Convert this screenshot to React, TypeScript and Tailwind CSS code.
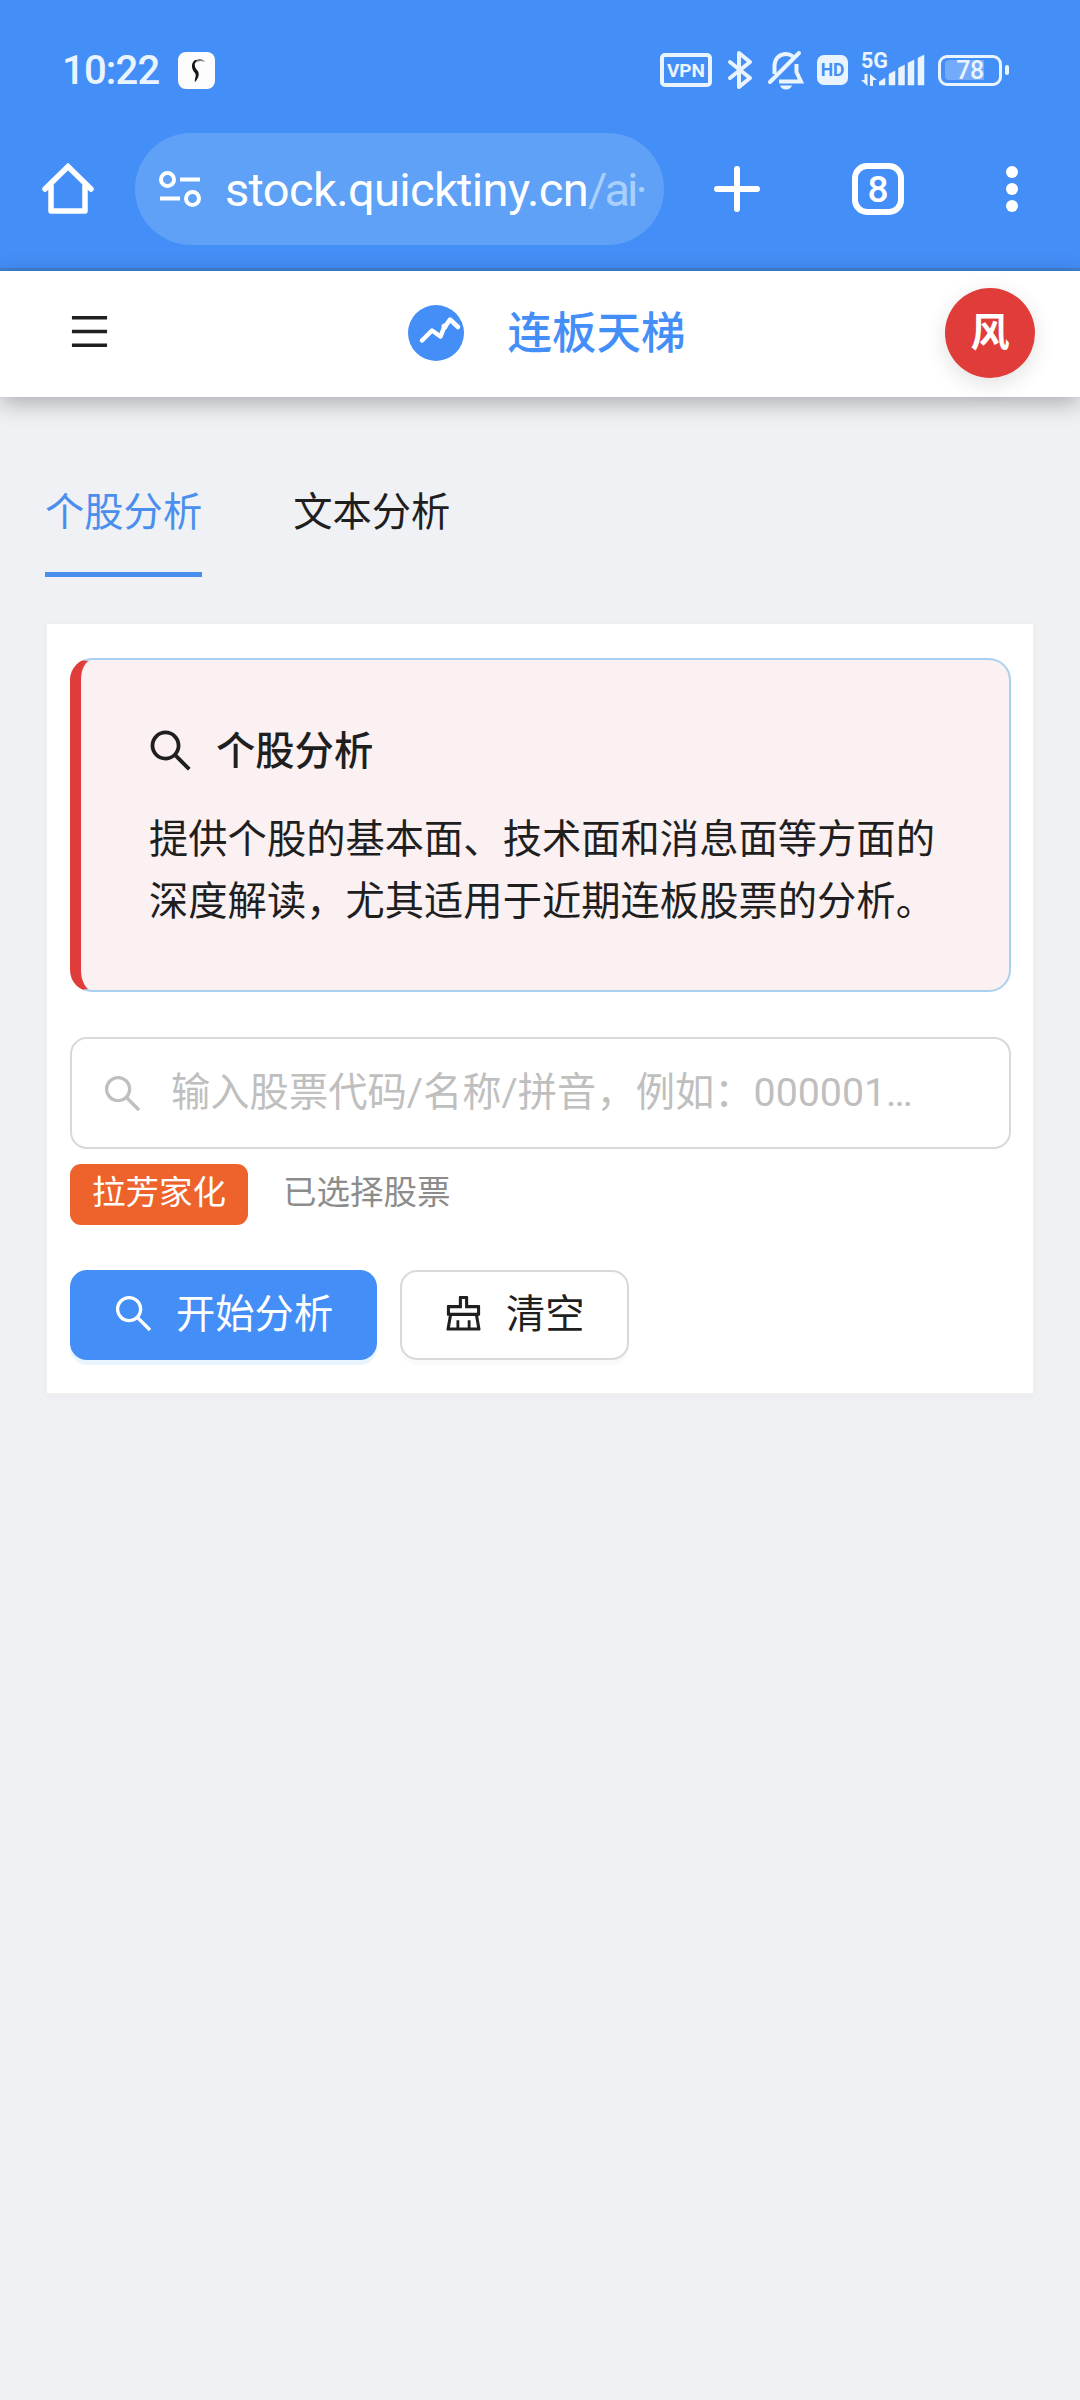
import { AiOutlineClear, AiOutlineMenu, AiOutlineSearch } from "react-icons/ai";

const signalBars = [
  "M0 32v-3l6-4v7z",
  "M10 32V21l6-3v14z",
  "M19.5 32V15l6-3v20z",
  "M29 32V10l6-3v25z",
  "M39 32V5l6-3v30z",
];

function StatusBar() {
  return (
    <div className="flex h-[133px] items-start justify-between pt-[48px] pr-[71px] pl-[62px] text-[#eaf4ff]">
      <div className="flex h-[44px] items-center">
        <span className="w-[116px] pt-[2px] text-[40px] leading-[44px] font-medium tracking-[-0.8px]">10:22</span>
        <span className="flex size-[37px] items-center justify-center rounded-[8px] bg-[#fdfdfd]">
          <svg width="37" height="37" viewBox="0 0 37 37" fill="none">
            <path d="M16 10C20 5 25 7 27 10C23 8 20 9 17 11Z" fill="#777" />
            <path d="M17 8C12 12 14 18 17 21C19 24 16 27 17 30C21 26 22 21 19 18C16 15 16 11 19 8Z" fill="#171717" />
          </svg>
        </span>
      </div>

      <div className="flex h-[44px] items-center">
        <span className="flex h-[34px] w-[52px] items-center justify-center rounded-[5px] border-4 border-[#eaf4ff] text-[19px] leading-none font-bold">
          VPN
        </span>
        <svg className="ml-[15px]" width="26" height="40" viewBox="0 0 26 40" fill="none" stroke="currentColor" strokeWidth="4" strokeLinejoin="round" strokeLinecap="round">
          <path d="M3 12L23 28L12 37V3L23 12L3 28" />
        </svg>
        <svg className="ml-[14px]" width="38" height="40" viewBox="0 0 38 40" fill="none" stroke="currentColor" strokeWidth="4">
          <path d="M7.500 24V16C7.500 9 12 4 19 4C21.500 4 24 5 26 6.500" />
          <path d="M29.500 14V22L34 31.500H12" />
          <path d="M3 32L32 3" strokeLinecap="round" />
          <path d="M13 35.500H25C24 38 22 39.500 19 39.500S14 38 13 35.500Z" fill="currentColor" stroke="none" />
        </svg>
        <span className="ml-[12px] flex h-[30px] w-[31px] items-center justify-center rounded-[7px] bg-[#eaf4ff] pt-px text-[17.500px] leading-none font-bold text-[#448ef7]">
          HD
        </span>
        <div className="relative ml-[13px] h-[36px] w-[65px]">
          <span className="absolute -top-[2px] left-0 text-[21.500px] leading-[22px] font-bold">5G</span>
          <svg className="absolute top-[1px] left-[18px]" width="46" height="34" viewBox="0 0 46 34" fill="currentColor">
            {signalBars.map((d) => (
              <path key={d} d={d} stroke="currentColor" strokeWidth="0.5" strokeLinejoin="round" />
            ))}
          </svg>
          <svg className="absolute top-[22px] left-0" width="16" height="12" viewBox="0 0 16 12" fill="currentColor">
            <path d="M3.500 0H6.500V12L0 6H3.500ZM9 12V0L16 6H12V12Z" />
          </svg>
        </div>
        <div className="relative ml-[12px] flex h-[31px] w-[64px] items-center rounded-[9px] border-[3px] border-[#eaf4ff] p-[4px]">
          <div className="h-[20px] w-[39px] rounded-l-[4px] bg-white/25" />
          <span className="absolute inset-0 flex items-center justify-center pt-px text-[25px] leading-none font-medium tracking-[-0.5px]">78</span>
        </div>
        <span className="ml-[3px] h-[10px] w-[4px] rounded-full bg-[#eaf4ff]" />
      </div>
    </div>
  );
}

function BrowserBar() {
  return (
    <div className="flex h-[112px] items-center text-white">
      <svg className="ml-[42px]" width="52" height="52" viewBox="0 0 52 52" fill="none" stroke="currentColor" strokeWidth="5.5" strokeLinecap="round">
        <path d="M3 26L26 3.500L49 26" strokeLinejoin="miter" />
        <path d="M9 23V48H43V23" strokeLinejoin="round" />
      </svg>
      <div className="ml-[41px] flex h-[112px] w-[529px] items-center rounded-full bg-[#5fa1f7]">
        <svg className="ml-[23px] shrink-0" width="44" height="38" viewBox="0 0 44 38" fill="none" stroke="currentColor" strokeWidth="4">
          <circle cx="9.500" cy="9.500" r="6.500" />
          <path d="M22 9.500H42M2 28.500H22" />
          <circle cx="34.500" cy="28.500" r="6.500" />
        </svg>
        <span className="ml-[23px] text-[47px] leading-none tracking-[-0.65px] whitespace-nowrap">
          stock.quicktiny.cn<span className="tracking-[-3px] text-[#a9cffb]">/ai·</span>
        </span>
      </div>
      <svg className="ml-[50px]" width="46" height="46" viewBox="0 0 46 46" stroke="currentColor" strokeWidth="6" strokeLinecap="round">
        <path d="M3 23H43M23 3V43" />
      </svg>
      <span className="ml-[92px] flex size-[52px] items-center justify-center rounded-[15px] border-[6px] border-white pt-px text-[37px] leading-none font-medium">
        8
      </span>
      <span className="ml-[102px] flex flex-col gap-[5px]">
        <i className="size-[12px] rounded-full bg-white" />
        <i className="size-[12px] rounded-full bg-white" />
        <i className="size-[12px] rounded-full bg-white" />
      </span>
    </div>
  );
}

function SiteHeader() {
  return (
    <header className="relative flex h-[126px] items-center justify-between bg-white pr-[45px] pb-[2px] pl-[67px] shadow-[0_6px_22px_rgba(0,0,0,0.29)]">
      <AiOutlineMenu className="mb-[3px] size-[45px] text-[#1f1f1f]" />
      <div className="flex items-center pr-[6px] pl-[43px]">
        <svg width="56" height="56" viewBox="0 0 56 56" fill="none">
          <circle cx="28" cy="28" r="28" fill="#448ef7" />
          <path d="M14 35.500L24 25.500L32.500 31.500L35.500 24L42 14.500L50 22" stroke="white" strokeWidth="4.500" strokeLinecap="round" strokeLinejoin="round" />
          <circle cx="36.500" cy="21.500" r="3" fill="white" />
        </svg>
        <h1 className="ml-[43px] pt-[2px] text-[44.500px] leading-[60px] font-medium text-[#448ef7]">连板天梯</h1>
      </div>
      <div className="flex size-[90px] items-center justify-center rounded-full bg-[#e03c39] text-[39px] font-bold text-white shadow-[0_6px_22px_rgba(0,0,0,0.12)]">
        风
      </div>
    </header>
  );
}

export default function App() {
  return (
    <div className="min-h-[2400px] w-[1080px] overflow-hidden bg-[#f0f1f5] font-[Roboto,'Noto_Sans_CJK_SC',sans-serif] text-[#1f1f1f]">
      <div className="h-[271px] border-b-[3px] border-[#4080d2] bg-[#448ef7]">
        <StatusBar />
        <BrowserBar />
      </div>
      <SiteHeader />

      <main className="px-[45px] pt-[75px] text-[39.300px]">
        <nav className="flex h-[105px] gap-[91px] border-b-2 border-[#eeeff1]">
          <button className="-mb-[2px] h-[105px] border-b-[5px] border-[#4a8fee] pb-[18px] text-[#4a8fee]">个股分析</button>
          <button className="h-[105px] pb-[23px]">文本分析</button>
        </nav>

        <section className="mt-[45px] h-[773px] border-2 border-[#efefef] bg-white pt-[34px] pr-[22px] pl-[23px] shadow-[0_3px_6px_rgba(0,0,0,0.02)]">
          <div className="h-[334px] rounded-[22px] border-2 border-l-[11px] border-[#a9d0ee] border-l-[#e03c39] bg-[#fbf1f2] pt-[59px] pl-[67px]">
            <h2 className="flex h-[62px] items-center font-medium">
              <AiOutlineSearch className="mr-[20px] -ml-[3px] size-[51px]" />
              <span className="pt-[4px]">个股分析</span>
            </h2>
            <p className="mt-[29px] ml-px w-[800px] leading-[61.500px]">
              提供个股的基本面、技术面和消息面等方面的
              <br />
              深度解读，尤其适用于近期连板股票的分析。
            </p>
          </div>

          <div className="mt-[45px] flex h-[112px] items-center rounded-[17px] border-2 border-[#d9d9d9] pl-[28px] text-[#bfbfbf]">
            <AiOutlineSearch className="size-[45px]" />
            <span className="ml-[26px]">
              输入股票代码/名称/拼音，例如：000001<span className="tracking-[-2px]">...</span>
            </span>
          </div>

          <div className="mt-[15px] flex h-[61px] text-[33.500px] leading-[57px]">
            <span className="rounded-[11px] bg-[#ee632c] px-[22px] text-white">拉芳家化</span>
            <span className="ml-[35px] text-[#8c8c8c]">已选择股票</span>
          </div>

          <div className="mt-[45px] flex gap-[23px]">
            <button className="flex h-[90px] w-[307px] items-center rounded-[17px] bg-[#448ef7] pl-[41px] text-white shadow-[0_5px_0_#e8f5ff]">
              <AiOutlineSearch className="mb-[4px] size-[45px]" />
              <span className="ml-[20px]">开始分析</span>
            </button>
            <button className="flex h-[90px] w-[229px] items-center rounded-[17px] border-2 border-[#d9d9d9] pl-[39px] shadow-[0_5px_0_#fafafa]">
              <AiOutlineClear className="mb-[4px] size-[45px]" />
              <span className="ml-[20px]">清空</span>
            </button>
          </div>
        </section>
      </main>
    </div>
  );
}
